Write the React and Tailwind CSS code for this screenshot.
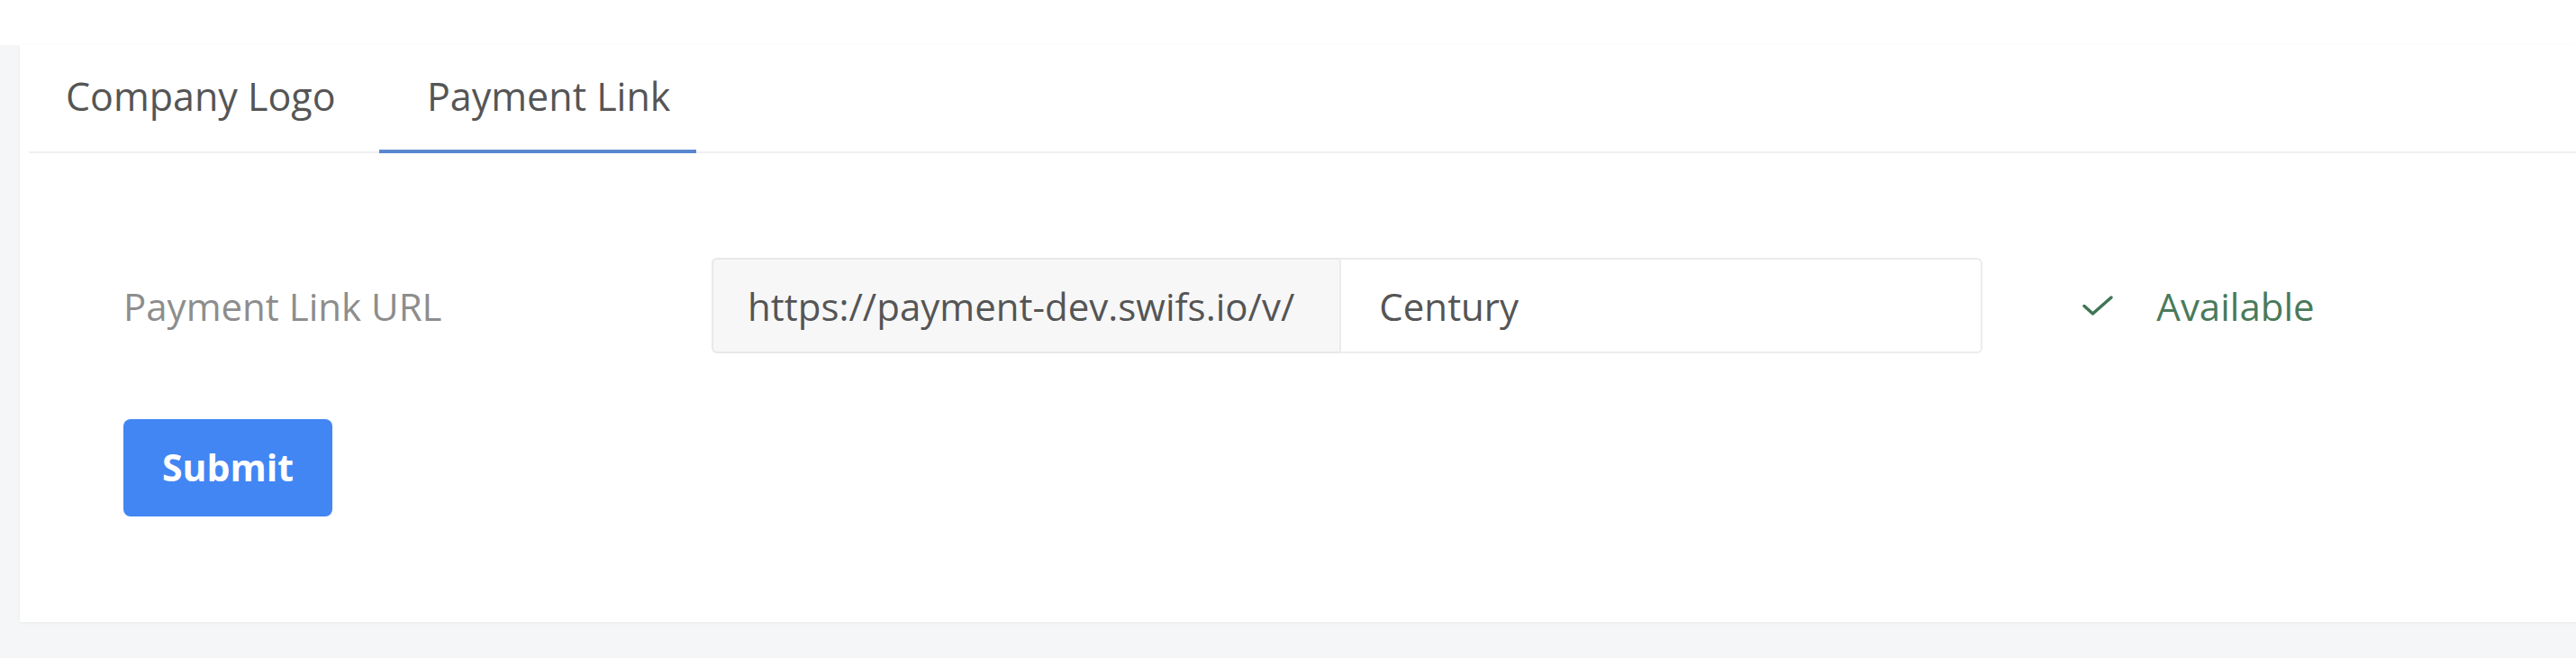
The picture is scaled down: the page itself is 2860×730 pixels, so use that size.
import { useState } from 'react';

const FONT = { fontFamily: '"Open Sans", "Noto Sans", "Liberation Sans", sans-serif' };

const TABS = [
  { key: 'logo', label: 'Company Logo', box: 'w-[389px] pl-[41px]' },
  { key: 'link', label: 'Payment Link', box: 'w-[352px] pl-[53px]' },
];

const CheckMark = () => (
  <svg width="36" height="24" viewBox="0 0 36 24" fill="none" className="shrink-0">
    <path d="M3 12.5 L12.5 21 L33 3" stroke="#3f7452" strokeWidth="3.5" strokeLinecap="round" strokeLinejoin="round" />
  </svg>
);

const App = () => {
  const [tab, setTab] = useState('link');
  const [slug, setSlug] = useState('Century');

  return (
    <div className="w-full h-[730px] bg-white flex flex-col overflow-hidden" style={FONT}>
      <div className="h-[50px] shrink-0 bg-white" />

      <div className="flex-1 flex bg-[#f5f6f8] pl-[22px] pb-[40px]">
        <div className="flex-1 bg-white shadow-[0_1px_4px_rgba(0,0,0,0.05)] flex flex-col">
          {/* Tabs */}
          <div className="ml-[10px] flex border-b-2 border-[#eef0f3]">
            {TABS.map(t => (
              <button
                key={t.key}
                onClick={() => setTab(t.key)}
                className={`h-[120px] -mb-[2px] flex items-center text-[43px] text-[#555555] border-b-4 ${t.box} ${tab === t.key ? 'border-[#5a86d0]' : 'border-transparent'}`}
              >
                <span className="-mt-[2px]">{t.label}</span>
              </button>
            ))}
          </div>

          {/* Payment link form */}
          <div className="pl-[115px] pt-[116px]">
            <div className="flex items-center">
              <div className="w-[653px] text-[42px] text-[#8d8d8d]">Payment Link URL</div>
              <div className="h-[106px] flex items-center pl-[38px] pr-[50px] bg-[#f7f7f8] border-2 border-[#e8e8ea] rounded-l-[6px] text-[42px] text-[#555555]">
                https://payment-dev.swifs.io/v/
              </div>
              <input
                value={slug}
                onChange={e => setSlug(e.target.value)}
                className="h-[106px] w-[714px] -ml-[2px] pl-[42px] border-2 border-[#ececee] rounded-r-[6px] text-[42px] text-[#555555] outline-none"
                style={FONT}
              />
              <div className="ml-[110px] flex items-center gap-[47px] text-[42px] text-[#4a7a5a]">
                <CheckMark />
                <span>Available</span>
              </div>
            </div>

            <button className="mt-[73px] w-[232px] h-[108px] rounded-[8px] bg-[#4286f4] text-white text-[41px] font-bold">
              Submit
            </button>
          </div>
        </div>
      </div>
    </div>
  );
};

export default App;
